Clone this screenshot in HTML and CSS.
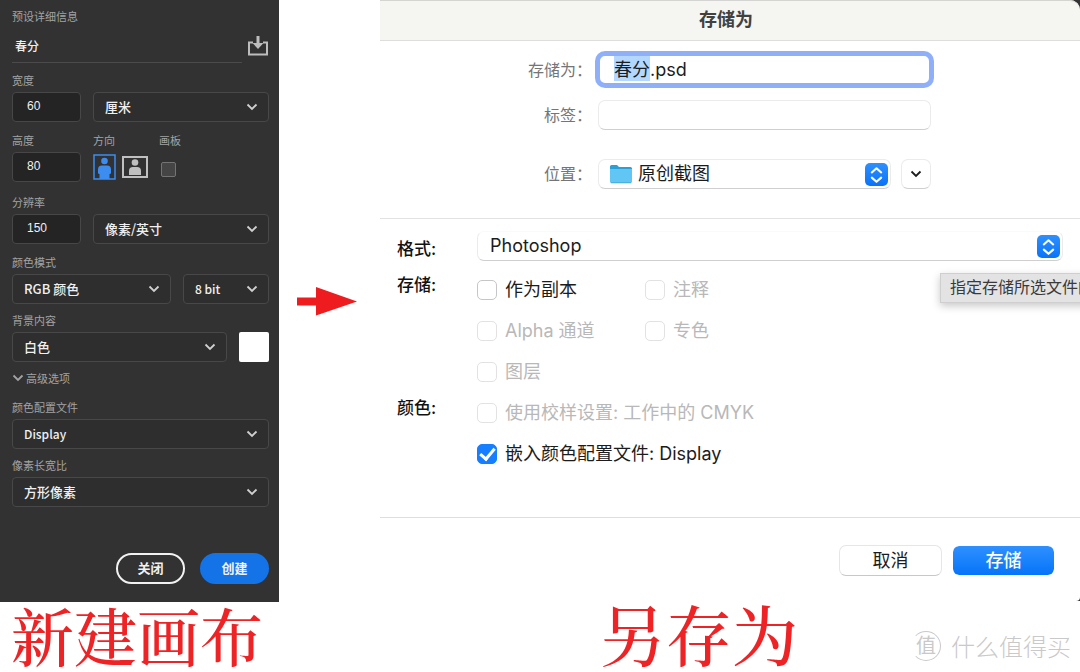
FILE: index.html
```
<!DOCTYPE html>
<html lang="zh-CN">
<head>
<meta charset="utf-8">
<title>新建画布 / 另存为</title>
<link rel="stylesheet" href="styles.css">
</head>
<body>
<svg class="defs" width="0" height="0" aria-hidden="true">
  <symbol id="chevron" viewBox="0 0 12 8"><path d="M1.500 1.500 6 6l4.500-4.500" fill="none" stroke="currentColor" stroke-width="1.800"/></symbol>
  <symbol id="updown" viewBox="0 0 22 22"><path d="M6.500 9 11 5l4.500 4M6.500 14l4.500 4 4.500-4" fill="none" stroke="#fff" stroke-width="2" stroke-linecap="round" stroke-linejoin="round"/></symbol>
</svg>
<main class="page">
  <figure class="step step-new">
    <form class="preset">
      <h2 class="hint">预设详细信息</h2>
      <div class="name-row">
        <input class="name" type="text" value="春分" aria-label="名称">
        <button class="icon-button" type="button" aria-label="存储预设">
          <svg width="22" height="20" viewBox="0 0 22 20"><path d="M6 6.500H2V18.500H20V6.500H16" fill="none" stroke="#bdbdbd" stroke-width="2"/><path d="M11 0V9" stroke="#bdbdbd" stroke-width="3"/><path d="M5.500 7H16.500L11 13Z" fill="#bdbdbd"/></svg>
        </button>
      </div>
      <div class="group">
        <label class="hint" for="width">宽度</label>
        <div class="fields">
          <input id="width" class="number" type="text" value="60">
          <span class="select grow"><select aria-label="单位"><option>厘米</option></select><svg class="chevron"><use href="#chevron"/></svg></span>
        </div>
      </div>
      <div class="group roomy orientation">
        <div class="cell cell-number">
          <label class="hint" for="height">高度</label>
          <input id="height" class="number" type="text" value="80">
        </div>
        <div class="cell cell-direction">
          <span class="hint">方向</span>
          <div class="fields directions">
            <button class="icon-button" type="button" aria-label="纵向"><svg width="23" height="26" viewBox="0 0 23 26"><rect x="1" y="1" width="21" height="24" fill="none" stroke="#3d8df0" stroke-width="1.500"/><circle cx="11.500" cy="7" r="3.300" fill="#3d8df0"/><path d="M5 19V15.500Q5 11.500 9 11.500H14Q18 11.500 18 15.500V19Q18 20 16.500 20V25H6.500V20Q5 20 5 19Z" fill="#3d8df0"/></svg></button>
            <button class="icon-button" type="button" aria-label="横向"><svg width="26" height="22" viewBox="0 0 26 22"><rect x="1" y="1" width="24" height="20" fill="none" stroke="#c0c0c0" stroke-width="2"/><circle cx="13" cy="6.500" r="3.300" fill="#c0c0c0"/><path d="M7 19V15Q7 11 11 11H15Q19 11 19 15V19Z" fill="#c0c0c0"/></svg></button>
          </div>
        </div>
        <div class="cell">
          <label class="hint" for="artboard">画板</label>
          <div class="fields"><input id="artboard" class="artboard" type="checkbox"></div>
        </div>
      </div>
      <div class="group">
        <label class="hint" for="resolution">分辨率</label>
        <div class="fields">
          <input id="resolution" class="number" type="text" value="150">
          <span class="select grow"><select aria-label="分辨率单位"><option>像素/英寸</option></select><svg class="chevron"><use href="#chevron"/></svg></span>
        </div>
      </div>
      <div class="group tight">
        <label class="hint" for="mode">颜色模式</label>
        <div class="fields">
          <span class="select grow"><select id="mode"><option>RGB 颜色</option></select><svg class="chevron"><use href="#chevron"/></svg></span>
          <span class="select latin depth"><select aria-label="位深度"><option>8 bit</option></select><svg class="chevron"><use href="#chevron"/></svg></span>
        </div>
      </div>
      <div class="group tight">
        <label class="hint" for="background">背景内容</label>
        <div class="fields">
          <span class="select grow"><select id="background"><option>白色</option></select><svg class="chevron"><use href="#chevron"/></svg></span>
          <button class="swatch" type="button" aria-label="背景颜色"></button>
        </div>
      </div>
      <button class="advanced hint" type="button"><svg width="12" height="8"><use href="#chevron"/></svg>高级选项</button>
      <div class="group tight">
        <label class="hint" for="profile">颜色配置文件</label>
        <span class="select latin"><select id="profile"><option>Display</option></select><svg class="chevron"><use href="#chevron"/></svg></span>
      </div>
      <div class="group">
        <label class="hint" for="ratio">像素长宽比</label>
        <span class="select"><select id="ratio"><option>方形像素</option></select><svg class="chevron"><use href="#chevron"/></svg></span>
      </div>
      <div class="preset-actions">
        <button class="pill" type="button">关闭</button>
        <button class="pill pill-primary" type="button">创建</button>
      </div>
    </form>
    <figcaption class="caption">新建画布</figcaption>
  </figure>

  <div class="arrow"><svg width="60" height="30" viewBox="0 0 60 30" aria-hidden="true"><path d="M0 10.500H19V0L60 14.500 19 28.500V18.500H0Z" fill="#ee1c1f"/></svg></div>

  <figure class="step step-save">
    <div class="backdrop">
      <form class="dialog">
        <h1 class="title">存储为</h1>
        <div class="file">
          <label for="filename">存储为：</label>
          <input id="filename" class="box filename" type="text" value="春分.psd">
          <label for="tags">标签：</label>
          <input id="tags" class="box" type="text">
          <label class="place-row" for="place">位置：</label>
          <div class="place place-row">
            <span class="popup">
              <svg class="folder" width="22" height="20" viewBox="0 0 22 20" aria-hidden="true"><path d="M0 2.500Q0 1 1.500 1H7L9 3H20.500Q22 3 22 4.500V17H0Z" fill="#2ba0d6"/><path d="M0 5H22V17.500Q22 19 20.500 19H1.500Q0 19 0 17.500Z" fill="#62c6f5"/><path d="M1 18.800H21" stroke="#3d9fcb" stroke-width=".8"/></svg>
              <select id="place" class="box with-folder"><option>原创截图</option></select>
              <svg class="updown"><use href="#updown"/></svg>
            </span>
            <button class="box expand" type="button" aria-label="展开"><svg width="12" height="8"><use href="#chevron"/></svg></button>
          </div>
        </div>
        <div class="options">
          <label class="option-label format-label" for="format">格式:</label>
          <span class="popup format">
            <select id="format" class="box"><option>Photoshop</option></select>
            <svg class="updown"><use href="#updown"/></svg>
          </span>
          <span class="option-label raised">存储:</span>
          <label class="check"><input type="checkbox">作为副本</label>
          <label class="check off"><input type="checkbox" disabled>注释</label>
          <label class="check off start"><input type="checkbox" disabled>Alpha 通道</label>
          <label class="check off"><input type="checkbox" disabled>专色</label>
          <label class="check off start"><input type="checkbox" disabled>图层</label>
          <span class="option-label raised first">颜色:</span>
          <label class="check off wide"><input type="checkbox" disabled>使用校样设置: 工作中的 CMYK</label>
          <label class="check wide"><input type="checkbox" checked>嵌入颜色配置文件: Display</label>
          <div class="tooltip" role="tooltip">指定存储所选文件的</div>
        </div>
        <div class="actions">
          <button class="push" type="button">取消</button>
          <button class="push push-primary" type="submit">存储</button>
        </div>
      </form>
    </div>
    <figcaption class="caption">另存为</figcaption>
  </figure>
  <div class="watermark"><span class="seal">值</span>什么值得买</div>
</main>
<script src="script.js"></script>
</body>
</html>
```
FILE: styles.css
```
* { box-sizing: border-box; }

body {
  margin: 0;
  background: #fff;
  color: #1c1c1c;
  font-family: "Noto Sans CJK SC", sans-serif;
}

button, input, select {
  margin: 0;
  padding: 0;
  border: 0;
  background: none;
  color: inherit;
  font: inherit;
  appearance: none;
  outline: none;
}

svg { display: block; }
.defs { position: absolute; }

.page {
  position: relative;
  display: grid;
  grid-template-columns: 279px 101px minmax(0, 1fr);
  min-height: 100vh;
  overflow: hidden;
}

.step { margin: 0; }

.caption {
  color: #ee2325;
  font-family: "Noto Serif CJK SC", "Songti SC", SimSun, "Noto Sans CJK SC", serif;
  font-weight: 500;
  font-size: 63px;
  line-height: 64px;
  padding-left: 11px;
  white-space: nowrap;
}

.step-save .caption { font-size: 66px; padding-left: 220px; }

/* New document panel */
.preset {
  display: flex;
  flex-direction: column;
  padding: 7px 10px 18px 12px;
  background: #323232;
  color: #f0f0f0;
  font-size: 13px;
  font-weight: 500;
}

.hint {
  margin: 0;
  color: #a3a3a3;
  font-size: 11px;
  font-weight: 400;
  line-height: 18px;
}

.name-row {
  display: flex;
  align-items: center;
  justify-content: space-between;
  gap: 5px;
  margin: 4px 0 8px;
}

.name {
  flex: 1;
  min-width: 0;
  height: 34px;
  padding-left: 3px;
  border-bottom: 1px solid #4b4b4b;
  font-size: 12px;
}

.group { display: flex; flex-direction: column; gap: 3px; margin-bottom: 9px; }
.tight { margin-bottom: 7px; }
.roomy { margin-bottom: 11px; }
.orientation { flex-direction: row; gap: 12px; }
.cell { display: flex; flex-direction: column; gap: 3px; }
.cell-direction { width: 54px; }
.fields { display: flex; align-items: center; gap: 12px; min-height: 30px; }
.directions { gap: 6px; }

.number {
  width: 69px;
  height: 30px;
  padding: 0 0 2px 14px;
  border: 1px solid #474747;
  border-radius: 4px;
  background: #242424;
  font-family: "Liberation Sans", Arial, sans-serif;
  font-size: 12px;
}

.select { display: grid; align-items: center; }
.select > * { grid-area: 1 / 1; }
.grow { flex: 1; }
.depth { width: 86px; }
.latin { font-size: 12px; }

.select select {
  width: 100%;
  height: 30px;
  padding: 0 30px 2px 11px;
  border: 1px solid #484848;
  border-radius: 4px;
  background: #2e2e2e;
}

.chevron {
  justify-self: end;
  width: 12px;
  height: 8px;
  margin-right: 11px;
  color: #d0d0d0;
  pointer-events: none;
}

.icon-button { flex: none; }

.artboard {
  width: 15px;
  height: 15px;
  margin: 4px 0 0 2px;
  border: 1px solid #747474;
  border-radius: 2px;
  background: #454545;
}

.swatch { width: 30px; height: 30px; border-radius: 2px; background: #fff; }

.advanced {
  display: flex;
  align-items: center;
  gap: 2px;
  margin-bottom: 11px;
}

.preset-actions {
  display: flex;
  justify-content: flex-end;
  gap: 15px;
  margin-top: 37px;
}

.pill {
  width: 69px;
  height: 31px;
  padding-bottom: 3px;
  border: 2px solid #f2f2f2;
  border-radius: 16px;
  font-weight: 700;
}

.pill-primary { border-color: #1473e6; background: #1473e6; }

.arrow { padding: 287px 0 0 18px; }

/* Save dialog */
.backdrop { background: #333; }

.dialog {
  border-radius: 0 10px 4px 0;
  background: #fff;
  font-family: Inter, "Noto Sans CJK SC", sans-serif;
  font-size: 18px;
}

.title {
  margin: 0;
  padding: 0 8px 2px 0;
  border-top: 1px solid #d4d4d2;
  border-bottom: 1px solid #dededc;
  border-radius: 0 10px 0 0;
  background: #f5f5f2;
  color: #414141;
  font-size: 18px;
  font-weight: 700;
  line-height: 37px;
  text-align: center;
}

.file {
  display: grid;
  grid-template-columns: 212px minmax(0, 333px);
  align-items: center;
  gap: 15px 6px;
  padding: 13px 0 29px;
  border-bottom: 1px solid #e2e2e2;
}

.file label {
  color: #757575;
  font-size: 16px;
  line-height: 30px;
  text-align: right;
}

.box {
  width: 100%;
  height: 30px;
  padding: 0 12px;
  border: 1px solid #ebebeb;
  border-bottom-color: #cfcfcf;
  border-radius: 7px;
  background: #fff;
}

.filename {
  height: 31px;
  padding: 0 14px 3px;
  border: 2px solid #8fb0f9;
  box-shadow: 0 0 0 3px #8fb0f9;
}

.filename::selection { background: #b4d8fd; color: #1c1c1c; }

.file .place-row { margin-top: 14px; }
.place { display: flex; gap: 10px; }
.popup { position: relative; flex: 1; display: grid; align-items: center; }
.popup > * { grid-area: 1 / 1; }
.popup select { padding: 0 30px 2px 12px; }
.popup .with-folder { padding-left: 39px; }
.folder { position: relative; z-index: 1; margin-left: 12px; pointer-events: none; }

.updown {
  justify-self: end;
  width: 23px;
  height: 23px;
  margin-right: 3px;
  border-radius: 5px;
  background: linear-gradient(#2e90ff, #0a74f7);
  pointer-events: none;
}

.expand { display: grid; place-items: center; flex: none; width: 30px; padding: 0; }

.options {
  position: relative;
  display: grid;
  grid-template-columns: 80px 168px minmax(0, 1fr);
  grid-template-rows: 42px;
  grid-auto-rows: 41px;
  align-items: center;
  padding: 8px 17px 43px;
  border-bottom: 1px solid #dedede;
}

.option-label { color: #111; font-size: 17px; font-weight: 500; }
.format-label { padding-bottom: 2px; }
.format { grid-column: 2 / -1; margin-bottom: 4px; }
.format .box { border-top-color: #fafafa; }
.raised { padding-bottom: 12px; }

.check { display: flex; align-items: center; gap: 8px; line-height: 24px; white-space: nowrap; }
.start { grid-column: 2; }
.first { grid-column: 1; }
.wide { grid-column: 2 / -1; }

.check input {
  display: grid;
  place-items: center;
  width: 20px;
  height: 20px;
  border: 1px solid #c6c6c6;
  border-radius: 5px;
  background: #fff;
}

.off { color: #b8b8b8; }
.off input { border-color: #e2e2e2; }
.check input:checked { border-color: #167fff; background: #167fff; }

.check input:checked::before {
  content: "";
  width: 6px;
  height: 12px;
  margin-bottom: 3px;
  border: solid #fff;
  border-width: 0 3px 3px 0;
  rotate: 40deg;
}

.tooltip {
  position: absolute;
  top: 54px;
  left: 560px;
  padding: 0 9px 2px;
  border: 1px solid #cfcfcf;
  background: #e3e3e4;
  box-shadow: 0 3px 8px rgb(0 0 0 / 22%);
  color: #3a3a3a;
  font-size: 16px;
  line-height: 26px;
  white-space: nowrap;
}

.actions {
  display: flex;
  justify-content: flex-end;
  gap: 10px;
  padding: 27px 25px 25px;
}

.push {
  width: 103px;
  height: 31px;
  padding-bottom: 4px;
  border: 1px solid #e6e6e6;
  border-bottom-color: #c8c8c8;
  border-radius: 7px;
  background: #fff;
}

.push-primary {
  border-color: #fff;
  background: linear-gradient(#2e90ff, #0674f8) padding-box;
  color: #fff;
  font-weight: 500;
}

.watermark {
  position: absolute;
  right: 9px;
  bottom: 8px;
  display: flex;
  align-items: center;
  gap: 10px;
  color: #c9c9c9;
  font-size: 24px;
  font-weight: 300;
  line-height: 36px;
}

.seal {
  width: 30px;
  height: 30px;
  border: 1px solid #c9c9c9;
  border-left-color: transparent;
  border-radius: 50%;
  font-size: 20px;
  font-weight: 400;
  line-height: 26px;
  text-align: center;
}
```
FILE: script.js
```
const filename = document.getElementById("filename");
filename.focus();
filename.setSelectionRange(0, filename.value.lastIndexOf("."));
```
